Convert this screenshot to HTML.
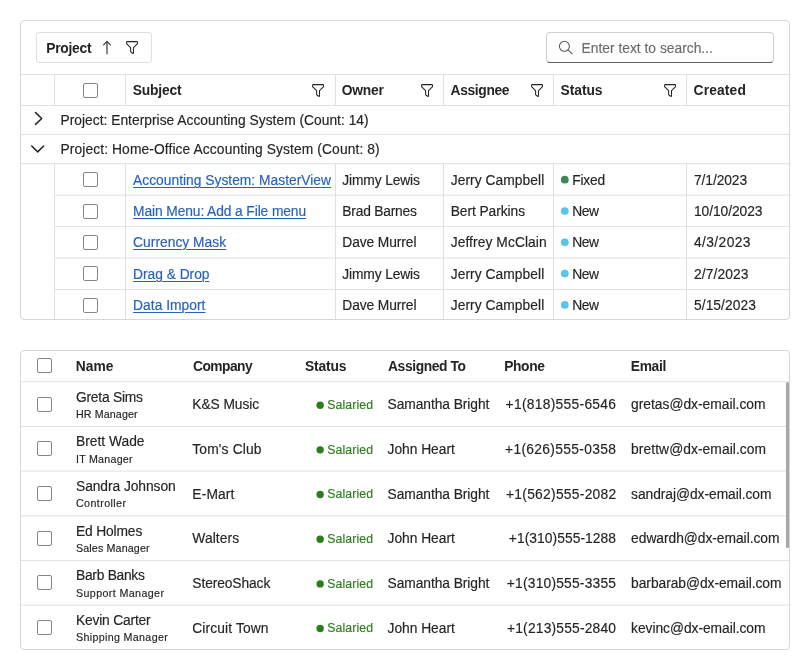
<!DOCTYPE html>
<html><head><meta charset="utf-8"><title>DataGrid</title>
<style>
html,body{margin:0;padding:0;background:#fff;}
body{width:810px;height:670px;position:relative;overflow:hidden;font-family:"Liberation Sans",sans-serif;color:#242424;}
body>div,body>svg,#tx>span{position:absolute;box-sizing:content-box;}
.t{white-space:pre;line-height:20px;height:20px;-webkit-text-stroke:0.15px currentColor;}
.b{-webkit-text-stroke:0;}
</style></head><body>
<div style="left:20px;top:20px;width:768px;height:298px;border:1px solid #d6d6d6;border-radius:4px;background:#fff;"></div>
<div style="left:36px;top:32px;width:114px;height:29px;border:1px solid #e0e0e0;border-radius:3px;"></div>
<svg style="left:101px;top:40px" width="12" height="15" viewBox="0 0 12 15"><path d="M6 13.8V1.4M2.6 4.9L6 1.4L9.4 4.9" fill="none" stroke="#424242" stroke-width="1.25" stroke-linecap="round" stroke-linejoin="round"/></svg>
<svg style="left:126.1px;top:40.9px" width="12.5" height="14" viewBox="0 0 12.5 14"><path d="M1.2 .6H10.9Q11.5 .6 11.5 1.2V2.3Q11.5 2.8 11.1 3.2L7.5 6.7V11.8Q7.5 12.7 6.7 12.2L5.1 11.2Q4.6 10.9 4.6 10.3V6.7L1 3.2Q.6 2.8 .6 2.3V1.2Q.6 .6 1.2 .6Z" fill="none" stroke="#242424" stroke-width="1.05" stroke-linejoin="round"/></svg>
<div style="left:546px;top:32px;width:226px;height:29px;border:1px solid #d1d1d1;border-bottom-color:#616161;border-radius:4px;"></div>
<svg style="left:557px;top:39px" width="17" height="17" viewBox="0 0 17 17"><circle cx="7.4" cy="7.3" r="5" fill="none" stroke="#555" stroke-width="1.05"/><path d="M11 10.9L15.2 14.9" stroke="#555" stroke-width="1.05" stroke-linecap="round"/></svg>
<div style="left:21px;top:74px;width:768px;height:1px;background:#e0e0e0;"></div>
<div style="left:21px;top:105px;width:768px;height:1px;background:#e0e0e0;"></div>
<div style="left:21px;top:134px;width:768px;height:1px;background:#e2e2e2;"></div>
<div style="left:21px;top:163px;width:768px;height:1px;background:#e6e6e6;"></div>
<div style="left:21px;top:164px;width:768px;height:1px;background:#f9f9f9;"></div>
<div style="left:54px;top:194px;width:735px;height:1px;background:#f4f4f4;"></div>
<div style="left:54px;top:195px;width:735px;height:1px;background:#ebebeb;"></div>
<div style="left:54px;top:226px;width:735px;height:1px;background:#e3e3e3;"></div>
<div style="left:54px;top:257px;width:735px;height:1px;background:#f1f1f1;"></div>
<div style="left:54px;top:258px;width:735px;height:1px;background:#eeeeee;"></div>
<div style="left:54px;top:289px;width:735px;height:1px;background:#e0e0e0;"></div>
<div style="left:54px;top:75px;width:1px;height:30px;background:#e0e0e0;"></div>
<div style="left:54px;top:164px;width:1px;height:155px;background:#e0e0e0;"></div>
<div style="left:125px;top:75px;width:1px;height:30px;background:#e0e0e0;"></div>
<div style="left:125px;top:164px;width:1px;height:155px;background:#e0e0e0;"></div>
<div style="left:335px;top:75px;width:1px;height:30px;background:#e0e0e0;"></div>
<div style="left:335px;top:164px;width:1px;height:155px;background:#e0e0e0;"></div>
<div style="left:443px;top:75px;width:1px;height:30px;background:#e0e0e0;"></div>
<div style="left:443px;top:164px;width:1px;height:155px;background:#e0e0e0;"></div>
<div style="left:553px;top:75px;width:1px;height:30px;background:#e0e0e0;"></div>
<div style="left:553px;top:164px;width:1px;height:155px;background:#e0e0e0;"></div>
<div style="left:686px;top:75px;width:1px;height:30px;background:#e0e0e0;"></div>
<div style="left:686px;top:164px;width:1px;height:155px;background:#e0e0e0;"></div>
<div style="left:83px;top:83px;width:13px;height:13px;border:1px solid #868686;border-radius:2px;background:#fff;"></div>
<div style="left:83px;top:172.4px;width:13px;height:13px;border:1px solid #868686;border-radius:2px;background:#fff;"></div>
<div style="left:83px;top:203.70000000000002px;width:13px;height:13px;border:1px solid #868686;border-radius:2px;background:#fff;"></div>
<div style="left:83px;top:235.0px;width:13px;height:13px;border:1px solid #868686;border-radius:2px;background:#fff;"></div>
<div style="left:83px;top:266.3px;width:13px;height:13px;border:1px solid #868686;border-radius:2px;background:#fff;"></div>
<div style="left:83px;top:297.6px;width:13px;height:13px;border:1px solid #868686;border-radius:2px;background:#fff;"></div>
<svg style="left:312.3px;top:83.7px" width="12.5" height="14" viewBox="0 0 12.5 14"><path d="M1.2 .6H10.9Q11.5 .6 11.5 1.2V2.3Q11.5 2.8 11.1 3.2L7.5 6.7V11.8Q7.5 12.7 6.7 12.2L5.1 11.2Q4.6 10.9 4.6 10.3V6.7L1 3.2Q.6 2.8 .6 2.3V1.2Q.6 .6 1.2 .6Z" fill="none" stroke="#242424" stroke-width="1.05" stroke-linejoin="round"/></svg>
<svg style="left:420.7px;top:83.7px" width="12.5" height="14" viewBox="0 0 12.5 14"><path d="M1.2 .6H10.9Q11.5 .6 11.5 1.2V2.3Q11.5 2.8 11.1 3.2L7.5 6.7V11.8Q7.5 12.7 6.7 12.2L5.1 11.2Q4.6 10.9 4.6 10.3V6.7L1 3.2Q.6 2.8 .6 2.3V1.2Q.6 .6 1.2 .6Z" fill="none" stroke="#242424" stroke-width="1.05" stroke-linejoin="round"/></svg>
<svg style="left:530.7px;top:83.7px" width="12.5" height="14" viewBox="0 0 12.5 14"><path d="M1.2 .6H10.9Q11.5 .6 11.5 1.2V2.3Q11.5 2.8 11.1 3.2L7.5 6.7V11.8Q7.5 12.7 6.7 12.2L5.1 11.2Q4.6 10.9 4.6 10.3V6.7L1 3.2Q.6 2.8 .6 2.3V1.2Q.6 .6 1.2 .6Z" fill="none" stroke="#242424" stroke-width="1.05" stroke-linejoin="round"/></svg>
<svg style="left:663.7px;top:83.7px" width="12.5" height="14" viewBox="0 0 12.5 14"><path d="M1.2 .6H10.9Q11.5 .6 11.5 1.2V2.3Q11.5 2.8 11.1 3.2L7.5 6.7V11.8Q7.5 12.7 6.7 12.2L5.1 11.2Q4.6 10.9 4.6 10.3V6.7L1 3.2Q.6 2.8 .6 2.3V1.2Q.6 .6 1.2 .6Z" fill="none" stroke="#242424" stroke-width="1.05" stroke-linejoin="round"/></svg>
<svg style="left:30px;top:108px" width="18" height="22" viewBox="0 0 18 22"><path d="M5.6 4.6L11.7 10.5L5.6 16.4" fill="none" stroke="#242424" stroke-width="1.5" stroke-linecap="round" stroke-linejoin="round"/></svg>
<svg style="left:28px;top:140px" width="20" height="18" viewBox="0 0 20 18"><path d="M3.7 6L9.7 11.9L15.7 6" fill="none" stroke="#242424" stroke-width="1.5" stroke-linecap="round" stroke-linejoin="round"/></svg>
<svg style="left:559px;top:174px" width="12" height="12" viewBox="0 0 12 12"><circle cx="5.80" cy="5.70" r="3.85" fill="#3c8755"/></svg>
<svg style="left:559px;top:206px" width="12" height="12" viewBox="0 0 12 12"><circle cx="5.80" cy="5.00" r="3.85" fill="#58c4ec"/></svg>
<svg style="left:559px;top:237px" width="12" height="12" viewBox="0 0 12 12"><circle cx="5.80" cy="5.30" r="3.85" fill="#58c4ec"/></svg>
<svg style="left:559px;top:268px" width="12" height="12" viewBox="0 0 12 12"><circle cx="5.80" cy="5.60" r="3.85" fill="#58c4ec"/></svg>
<svg style="left:559px;top:300px" width="12" height="12" viewBox="0 0 12 12"><circle cx="5.80" cy="4.90" r="3.85" fill="#58c4ec"/></svg>
<div style="left:20px;top:350px;width:768px;height:298px;border:1px solid #d6d6d6;border-radius:4px;background:#fff;"></div>
<div style="left:21px;top:381px;width:768px;height:1px;background:#e8e8e8;"></div>
<div style="left:21px;top:382px;width:768px;height:1px;background:#f7f7f7;"></div>
<div style="left:21px;top:426px;width:768px;height:1px;background:#e2e2e2;"></div>
<div style="left:21px;top:470px;width:768px;height:1px;background:#f2f2f2;"></div>
<div style="left:21px;top:471px;width:768px;height:1px;background:#ededed;"></div>
<div style="left:21px;top:515px;width:768px;height:1px;background:#e8e8e8;"></div>
<div style="left:21px;top:516px;width:768px;height:1px;background:#f7f7f7;"></div>
<div style="left:21px;top:560px;width:768px;height:1px;background:#e2e2e2;"></div>
<div style="left:21px;top:604px;width:768px;height:1px;background:#f3f3f3;"></div>
<div style="left:21px;top:605px;width:768px;height:1px;background:#ececec;"></div>
<div style="left:37px;top:358.4px;width:13px;height:13px;border:1px solid #868686;border-radius:2px;background:#fff;"></div>
<div style="left:37px;top:396.6px;width:13px;height:13px;border:1px solid #868686;border-radius:2px;background:#fff;"></div>
<svg style="left:315px;top:400px" width="12" height="12" viewBox="0 0 12 12"><circle cx="5.15" cy="5.20" r="3.7" fill="#2d7d1e"/></svg>
<div style="left:37px;top:441.27000000000004px;width:13px;height:13px;border:1px solid #868686;border-radius:2px;background:#fff;"></div>
<svg style="left:315px;top:445px" width="12" height="12" viewBox="0 0 12 12"><circle cx="5.15" cy="4.87" r="3.7" fill="#2d7d1e"/></svg>
<div style="left:37px;top:485.94000000000005px;width:13px;height:13px;border:1px solid #868686;border-radius:2px;background:#fff;"></div>
<svg style="left:315px;top:489px" width="12" height="12" viewBox="0 0 12 12"><circle cx="5.15" cy="5.54" r="3.7" fill="#2d7d1e"/></svg>
<div style="left:37px;top:530.61px;width:13px;height:13px;border:1px solid #868686;border-radius:2px;background:#fff;"></div>
<svg style="left:315px;top:534px" width="12" height="12" viewBox="0 0 12 12"><circle cx="5.15" cy="5.21" r="3.7" fill="#2d7d1e"/></svg>
<div style="left:37px;top:575.28px;width:13px;height:13px;border:1px solid #868686;border-radius:2px;background:#fff;"></div>
<svg style="left:315px;top:579px" width="12" height="12" viewBox="0 0 12 12"><circle cx="5.15" cy="4.88" r="3.7" fill="#2d7d1e"/></svg>
<div style="left:37px;top:619.95px;width:13px;height:13px;border:1px solid #868686;border-radius:2px;background:#fff;"></div>
<svg style="left:315px;top:623px" width="12" height="12" viewBox="0 0 12 12"><circle cx="5.15" cy="5.55" r="3.7" fill="#2d7d1e"/></svg>
<div style="left:786px;top:382px;width:3px;height:166px;background:#a6a6a6;border-radius:1.5px;"></div>
<div id="tx" style="left:0;top:0;width:810px;height:670px;will-change:transform;">
<span class="t b" style="left:46.20px;top:39.00px;font-size:13.8px;letter-spacing:-0.230px;font-weight:700;">Project</span>
<span class="t" style="left:581.60px;top:39.00px;font-size:13.8px;letter-spacing:0.005px;color:#6b6b6b;">Enter text to search...</span>
<span class="t b" style="left:132.80px;top:81.00px;font-size:13.8px;letter-spacing:-0.173px;font-weight:700;">Subject</span>
<span class="t b" style="left:341.80px;top:81.00px;font-size:13.8px;letter-spacing:-0.241px;font-weight:700;">Owner</span>
<span class="t b" style="left:450.60px;top:81.00px;font-size:13.8px;letter-spacing:-0.353px;font-weight:700;">Assignee</span>
<span class="t b" style="left:560.60px;top:81.00px;font-size:13.8px;letter-spacing:-0.058px;font-weight:700;">Status</span>
<span class="t b" style="left:693.60px;top:81.00px;font-size:13.8px;letter-spacing:0.142px;font-weight:700;">Created</span>
<span class="t" style="left:60.50px;top:111.00px;font-size:13.8px;letter-spacing:0.013px;">Project: Enterprise Accounting System (Count: 14)</span>
<span class="t" style="left:60.50px;top:140.00px;font-size:13.8px;letter-spacing:0.104px;">Project: Home-Office Accounting System (Count: 8)</span>
<span class="t" style="left:133.10px;top:171.00px;font-size:13.8px;letter-spacing:0.010px;color:#2562b8;text-decoration:underline;text-underline-offset:1.5px;text-decoration-thickness:1px;">Accounting System: MasterView</span>
<span class="t" style="left:342.30px;top:171.00px;font-size:13.8px;letter-spacing:-0.136px;">Jimmy Lewis</span>
<span class="t" style="left:450.70px;top:171.00px;font-size:13.8px;letter-spacing:0.061px;">Jerry Campbell</span>
<span class="t" style="left:572.20px;top:171.00px;font-size:13.8px;letter-spacing:-0.216px;">Fixed</span>
<span class="t" style="left:694.00px;top:171.00px;font-size:13.8px;letter-spacing:-0.090px;">7/1/2023</span>
<span class="t" style="left:133.10px;top:202.00px;font-size:13.8px;letter-spacing:-0.104px;color:#2562b8;text-decoration:underline;text-underline-offset:1.5px;text-decoration-thickness:1px;">Main Menu: Add a File menu</span>
<span class="t" style="left:342.30px;top:202.00px;font-size:13.8px;letter-spacing:-0.209px;">Brad Barnes</span>
<span class="t" style="left:450.70px;top:202.00px;font-size:13.8px;letter-spacing:-0.068px;">Bert Parkins</span>
<span class="t" style="left:572.20px;top:202.00px;font-size:13.8px;letter-spacing:-0.418px;">New</span>
<span class="t" style="left:694.00px;top:202.00px;font-size:13.8px;letter-spacing:-0.064px;">10/10/2023</span>
<span class="t" style="left:133.10px;top:233.00px;font-size:13.8px;letter-spacing:0.019px;color:#2562b8;text-decoration:underline;text-underline-offset:1.5px;text-decoration-thickness:1px;">Currency Mask</span>
<span class="t" style="left:342.30px;top:233.00px;font-size:13.8px;letter-spacing:-0.097px;">Dave Murrel</span>
<span class="t" style="left:450.70px;top:233.00px;font-size:13.8px;letter-spacing:0.082px;">Jeffrey McClain</span>
<span class="t" style="left:572.20px;top:233.00px;font-size:13.8px;letter-spacing:-0.418px;">New</span>
<span class="t" style="left:694.00px;top:233.00px;font-size:13.8px;letter-spacing:0.395px;">4/3/2023</span>
<span class="t" style="left:133.10px;top:265.00px;font-size:13.8px;letter-spacing:-0.030px;color:#2562b8;text-decoration:underline;text-underline-offset:1.5px;text-decoration-thickness:1px;">Drag &amp; Drop</span>
<span class="t" style="left:342.30px;top:265.00px;font-size:13.8px;letter-spacing:-0.136px;">Jimmy Lewis</span>
<span class="t" style="left:450.70px;top:265.00px;font-size:13.8px;letter-spacing:0.061px;">Jerry Campbell</span>
<span class="t" style="left:572.20px;top:265.00px;font-size:13.8px;letter-spacing:-0.418px;">New</span>
<span class="t" style="left:694.00px;top:265.00px;font-size:13.8px;letter-spacing:0.110px;">2/7/2023</span>
<span class="t" style="left:133.10px;top:296.00px;font-size:13.8px;letter-spacing:0.026px;color:#2562b8;text-decoration:underline;text-underline-offset:1.5px;text-decoration-thickness:1px;">Data Import</span>
<span class="t" style="left:342.30px;top:296.00px;font-size:13.8px;letter-spacing:-0.097px;">Dave Murrel</span>
<span class="t" style="left:450.70px;top:296.00px;font-size:13.8px;letter-spacing:0.061px;">Jerry Campbell</span>
<span class="t" style="left:572.20px;top:296.00px;font-size:13.8px;letter-spacing:-0.418px;">New</span>
<span class="t" style="left:694.00px;top:296.00px;font-size:13.8px;letter-spacing:0.062px;">5/15/2023</span>
<span class="t b" style="left:75.80px;top:357.00px;font-size:13.8px;letter-spacing:0.032px;font-weight:700;">Name</span>
<span class="t b" style="left:193.00px;top:357.00px;font-size:13.8px;letter-spacing:-0.531px;font-weight:700;">Company</span>
<span class="t b" style="left:305.00px;top:357.00px;font-size:13.8px;letter-spacing:-0.138px;font-weight:700;">Status</span>
<span class="t b" style="left:388.00px;top:357.00px;font-size:13.8px;letter-spacing:-0.374px;font-weight:700;">Assigned To</span>
<span class="t b" style="left:504.20px;top:357.00px;font-size:13.8px;letter-spacing:-0.371px;font-weight:700;">Phone</span>
<span class="t b" style="left:630.80px;top:357.00px;font-size:13.8px;letter-spacing:-0.344px;font-weight:700;">Email</span>
<span class="t" style="left:76.00px;top:388.00px;font-size:13.8px;letter-spacing:-0.233px;">Greta Sims</span>
<span class="t" style="left:76.00px;top:404.00px;font-size:10.7px;letter-spacing:0.108px;">HR Manager</span>
<span class="t" style="left:192.30px;top:395.00px;font-size:13.8px;letter-spacing:-0.084px;">K&amp;S Music</span>
<span class="t" style="left:327.30px;top:395.00px;font-size:12.3px;letter-spacing:0.089px;color:#2d7d1e;">Salaried</span>
<span class="t" style="left:387.50px;top:395.00px;font-size:13.8px;letter-spacing:-0.060px;">Samantha Bright</span>
<span class="t" style="left:505.60px;top:395.00px;font-size:13.8px;letter-spacing:0.295px;">+1(818)555-6546</span>
<span class="t" style="left:631.10px;top:395.00px;font-size:13.8px;letter-spacing:0.000px;">gretas@dx-email.com</span>
<span class="t" style="left:76.00px;top:432.00px;font-size:13.8px;letter-spacing:-0.003px;">Brett Wade</span>
<span class="t" style="left:76.00px;top:449.00px;font-size:10.7px;letter-spacing:0.235px;">IT Manager</span>
<span class="t" style="left:192.30px;top:440.00px;font-size:13.8px;letter-spacing:0.152px;">Tom's Club</span>
<span class="t" style="left:327.30px;top:440.00px;font-size:12.3px;letter-spacing:0.089px;color:#2d7d1e;">Salaried</span>
<span class="t" style="left:387.50px;top:440.00px;font-size:13.8px;letter-spacing:-0.017px;">John Heart</span>
<span class="t" style="left:505.00px;top:440.00px;font-size:13.8px;letter-spacing:0.338px;">+1(626)555-0358</span>
<span class="t" style="left:631.10px;top:440.00px;font-size:13.8px;letter-spacing:0.077px;">brettw@dx-email.com</span>
<span class="t" style="left:76.00px;top:477.00px;font-size:13.8px;letter-spacing:-0.062px;">Sandra Johnson</span>
<span class="t" style="left:76.00px;top:493.00px;font-size:10.7px;letter-spacing:0.403px;">Controller</span>
<span class="t" style="left:192.30px;top:485.00px;font-size:13.8px;letter-spacing:0.149px;">E-Mart</span>
<span class="t" style="left:327.30px;top:484.00px;font-size:12.3px;letter-spacing:0.089px;color:#2d7d1e;">Salaried</span>
<span class="t" style="left:387.50px;top:485.00px;font-size:13.8px;letter-spacing:-0.060px;">Samantha Bright</span>
<span class="t" style="left:506.00px;top:485.00px;font-size:13.8px;letter-spacing:0.281px;">+1(562)555-2082</span>
<span class="t" style="left:631.10px;top:485.00px;font-size:13.8px;letter-spacing:-0.047px;">sandraj@dx-email.com</span>
<span class="t" style="left:76.00px;top:522.00px;font-size:13.8px;letter-spacing:-0.147px;">Ed Holmes</span>
<span class="t" style="left:76.00px;top:538.00px;font-size:10.7px;letter-spacing:0.140px;">Sales Manager</span>
<span class="t" style="left:192.30px;top:529.00px;font-size:13.8px;letter-spacing:0.092px;">Walters</span>
<span class="t" style="left:327.30px;top:529.00px;font-size:12.3px;letter-spacing:0.089px;color:#2d7d1e;">Salaried</span>
<span class="t" style="left:387.50px;top:529.00px;font-size:13.8px;letter-spacing:-0.017px;">John Heart</span>
<span class="t" style="left:508.80px;top:529.00px;font-size:13.8px;letter-spacing:0.066px;">+1(310)555-1288</span>
<span class="t" style="left:631.10px;top:529.00px;font-size:13.8px;letter-spacing:-0.030px;">edwardh@dx-email.com</span>
<span class="t" style="left:76.00px;top:566.00px;font-size:13.8px;letter-spacing:-0.269px;">Barb Banks</span>
<span class="t" style="left:76.00px;top:583.00px;font-size:10.7px;letter-spacing:0.384px;">Support Manager</span>
<span class="t" style="left:192.30px;top:574.00px;font-size:13.8px;letter-spacing:-0.100px;">StereoShack</span>
<span class="t" style="left:327.30px;top:574.00px;font-size:12.3px;letter-spacing:0.089px;color:#2d7d1e;">Salaried</span>
<span class="t" style="left:387.50px;top:574.00px;font-size:13.8px;letter-spacing:-0.060px;">Samantha Bright</span>
<span class="t" style="left:506.80px;top:574.00px;font-size:13.8px;letter-spacing:0.209px;">+1(310)555-3355</span>
<span class="t" style="left:631.10px;top:574.00px;font-size:13.8px;letter-spacing:-0.044px;">barbarab@dx-email.com</span>
<span class="t" style="left:76.00px;top:611.00px;font-size:13.8px;letter-spacing:-0.189px;">Kevin Carter</span>
<span class="t" style="left:76.00px;top:627.00px;font-size:10.7px;letter-spacing:0.334px;">Shipping Manager</span>
<span class="t" style="left:192.30px;top:619.00px;font-size:13.8px;letter-spacing:0.113px;">Circuit Town</span>
<span class="t" style="left:327.30px;top:618.00px;font-size:12.3px;letter-spacing:0.089px;color:#2d7d1e;">Salaried</span>
<span class="t" style="left:387.50px;top:619.00px;font-size:13.8px;letter-spacing:-0.017px;">John Heart</span>
<span class="t" style="left:507.00px;top:619.00px;font-size:13.8px;letter-spacing:0.195px;">+1(213)555-2840</span>
<span class="t" style="left:631.10px;top:619.00px;font-size:13.8px;letter-spacing:-0.042px;">kevinc@dx-email.com</span>
</div>
</body></html>
